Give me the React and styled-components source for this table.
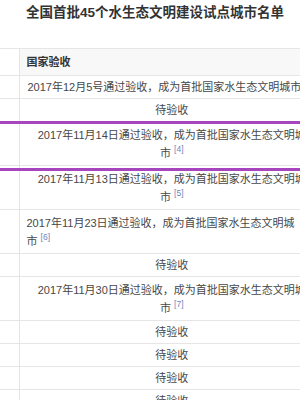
import React from "react";
import styled, { createGlobalStyle } from "styled-components";

const rows = [
  { lines: ["2017年12月5号通过验收，成为首批国家水生态文明城市"], align: "left", indent: 8 },
  { lines: ["待验收"], align: "center" },
  { lines: ["2017年11月14日通过验收，成为首批国家水生态文明城", "市"], note: "[4]", align: "center", marked: true },
  { lines: ["2017年11月13日通过验收，成为首批国家水生态文明城", "市"], note: "[5]", align: "center" },
  { lines: ["2017年11月23日通过验收，成为首批国家水生态文明城", "市"], note: "[6]", align: "left" },
  { lines: ["待验收"], align: "center" },
  { lines: ["2017年11月30日通过验收，成为首批国家水生态文明城", "市"], note: "[7]", align: "center" },
  { lines: ["待验收"], align: "center" },
  { lines: ["待验收"], align: "center" },
  { lines: ["待验收"], align: "center" },
  { lines: ["待验收"], align: "center" },
];

function App() {
  return (
    <Page>
      <GlobalStyle />
      <Title>全国首批45个水生态文明建设试点城市名单</Title>
      <Table>
        <colgroup>
          <col style={{ width: 19 }} />
          <col />
        </colgroup>
        <thead>
          <tr>
            <Side as="th" />
            <Head>国家验收</Head>
          </tr>
        </thead>
        <tbody>
          {rows.map((row, i) => (
            <Row key={i} $marked={row.marked}>
              <Side />
              <Cell $align={row.align} $indent={row.indent} $tall={row.lines.length > 1}>
                {row.lines.map((line, j) => (
                  <React.Fragment key={j}>
                    {j > 0 && <br />}
                    {line}
                  </React.Fragment>
                ))}
                {row.note && (
                  <>
                    {" "}
                    <Ref>{row.note}</Ref>
                  </>
                )}
              </Cell>
            </Row>
          ))}
        </tbody>
      </Table>
    </Page>
  );
}

const GlobalStyle = createGlobalStyle`
  body {
    margin: 0;
    overflow: hidden;
    background: #fff;
    font-family: "Liberation Sans", "Noto Sans CJK SC", sans-serif;
  }
`;

const Page = styled.div`
  width: 300px;
  height: 400px;
  overflow: hidden;
  background: #fff;
`;

const Title = styled.h2`
  margin: 0 0 26px;
  padding: 4px 0 0 26px;
  font-size: 13.5px;
  line-height: 18px;
  font-weight: 600;
  color: #333;
  white-space: nowrap;
`;

const Table = styled.table`
  width: 324px;
  table-layout: fixed;
  border-collapse: collapse;
  font-size: 11px;
  line-height: 18px;
  color: #474747;
`;

const Head = styled.th`
  text-align: left;
  padding: 4px 7px;
  font-weight: 700;
  color: #333;
  background: #f8f8f8;
  border-top: 1px solid #e6e6e6;
  border-bottom: 1px solid #e6e6e6;
  white-space: nowrap;
`;

const Side = styled.td`
  border-right: 1px solid #e4e4e4;
  border-top: 1px solid #e6e6e6;
  border-bottom: 1px solid #e6e6e6;
  background: #fff;
`;

const Row = styled.tr`
  ${(p) =>
    p.$marked &&
    `
    & > td { position: relative; }
    & > td::after {
      content: "";
      position: absolute;
      left: 0;
      right: -1px;
      top: -1px;
      bottom: -6px;
      border-top: 3px solid #a645bd;
      border-bottom: 3px solid #a645bd;
      pointer-events: none;
    }
  `}
`;

const Cell = styled.td`
  text-align: ${(p) => p.$align};
  padding: ${(p) => (p.$tall ? "4px 7px 3px" : "2px 7px")};
  padding-left: ${(p) => p.$indent || 7}px;
  border-top: 1px solid #e6e6e6;
  border-bottom: 1px solid #e6e6e6;
  white-space: nowrap;
`;

const Ref = styled.sup`
  font-size: 8.5px;
  line-height: 0;
  color: #7186bd;
  vertical-align: 5px;
`;

export default App;
